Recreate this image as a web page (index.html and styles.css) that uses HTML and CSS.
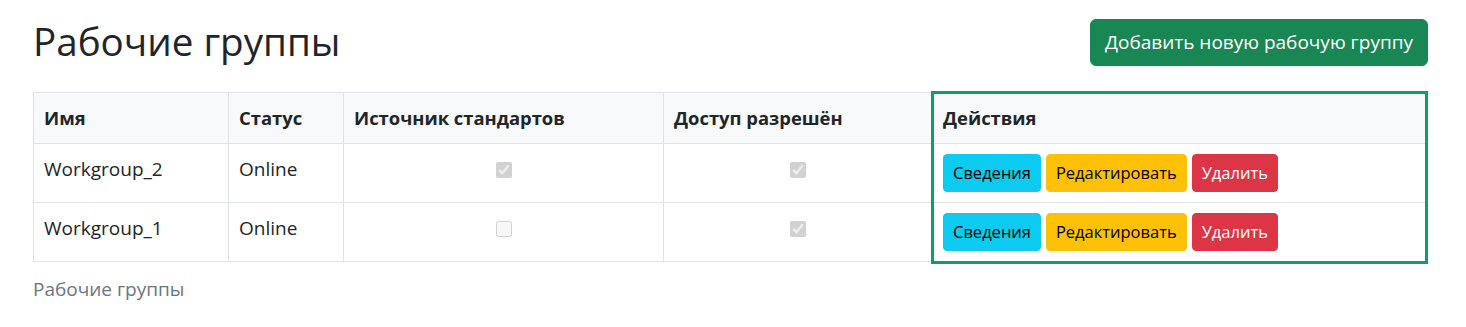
FILE: index.html
```html
<!DOCTYPE html>
<html lang="ru">
<head>
<meta charset="utf-8">
<title>Рабочие группы</title>
<link rel="stylesheet" href="styles.css">
</head>
<body>
<div class="page">
  <div class="header">
    <h1 class="title">Рабочие группы</h1>
    <button class="btn btn-lg btn-success" type="button">Добавить новую рабочую группу</button>
  </div>
  <div class="table-wrap">
    <table class="table">
      <caption class="caption">Рабочие группы</caption>
      <colgroup>
        <col class="col-name">
        <col class="col-status">
        <col class="col-source">
        <col class="col-access">
        <col class="col-actions">
      </colgroup>
      <thead>
        <tr>
          <th>Имя</th>
          <th>Статус</th>
          <th>Источник стандартов</th>
          <th>Доступ разрешён</th>
          <th>Действия</th>
        </tr>
      </thead>
      <tbody>
        <tr>
          <td>Workgroup_2</td>
          <td>Online</td>
          <td class="center"><input class="check" type="checkbox" checked disabled></td>
          <td class="center"><input class="check" type="checkbox" checked disabled></td>
          <td class="actions">
            <button class="btn btn-sm btn-info" type="button">Сведения</button>
            <button class="btn btn-sm btn-warning" type="button">Редактировать</button>
            <button class="btn btn-sm btn-danger" type="button">Удалить</button>
          </td>
        </tr>
        <tr>
          <td>Workgroup_1</td>
          <td>Online</td>
          <td class="center"><input class="check" type="checkbox" disabled></td>
          <td class="center"><input class="check" type="checkbox" checked disabled></td>
          <td class="actions">
            <button class="btn btn-sm btn-info" type="button">Сведения</button>
            <button class="btn btn-sm btn-warning" type="button">Редактировать</button>
            <button class="btn btn-sm btn-danger" type="button">Удалить</button>
          </td>
        </tr>
      </tbody>
    </table>
    <div class="highlight"></div>
  </div>
</div>
</body>
</html>
```
FILE: styles.css
```css
* { box-sizing: border-box; }

html, body {
  margin: 0;
  padding: 0;
  background: #fff;
}

body {
  font-family: "Open Sans", "Noto Sans", sans-serif;
  font-size: 19px;
  line-height: 1.5;
  color: #212529;
}

.page {
  width: 1395px;
  margin-left: 33px;
  padding-top: 19px;
}

.header {
  display: flex;
  justify-content: space-between;
  align-items: center;
  margin-bottom: 26px;
}

.title {
  margin: 0;
  font-size: 38.6px;
  font-weight: 500;
  line-height: 1.2;
  position: relative;
  top: -1px;
}

.btn {
  display: inline-block;
  font-family: inherit;
  border: 1px solid transparent;
  cursor: pointer;
  vertical-align: middle;
  line-height: 1.5;
}

.btn-lg {
  font-size: 19px;
  line-height: 29px;
  height: 47px;
  padding: 8px 14px;
  border-radius: 6px;
}

.btn-sm {
  font-size: 16.5px;
  line-height: 24px;
  height: 38px;
  padding: 6px 9px;
  border-radius: 4px;
  vertical-align: top;
}

.btn-success { background: #198754; border-color: #198754; color: #fff; }
.btn-info { background: #0dcaf0; border-color: #0dcaf0; color: #000; }
.btn-warning { background: #ffc107; border-color: #ffc107; color: #000; }
.btn-danger { background: #dc3545; border-color: #dc3545; color: #fff; }

.table-wrap {
  position: relative;
}

.table {
  width: 1393px;
  border-collapse: collapse;
  table-layout: fixed;
  caption-side: bottom;
}

.col-name { width: 195px; }
.col-status { width: 115px; }
.col-source { width: 320px; }
.col-access { width: 269px; }
.col-actions { width: 494px; }

.table th,
.table td {
  border: 1px solid #dee2e6;
  padding: 10px 10px;
  line-height: 30px;
  vertical-align: top;
  text-align: left;
}

.table thead th {
  background: #f8f9fa;
  font-weight: 700;
  font-size: 18.4px;
}

.table tbody td {
  height: 59px;
}

.table td.center {
  text-align: center;
}

.table td.actions {
  padding-bottom: 0;
  line-height: 38px;
}

.check {
  width: 16px;
  height: 16px;
  margin: 0;
  vertical-align: -2px;
}

.caption {
  text-align: left;
  color: #6c757d;
  padding: 13px 0 10px;
}

.highlight {
  position: absolute;
  left: 898px;
  top: -1px;
  width: 497px;
  height: 173px;
  border: 3px solid #0f9d6c;
  pointer-events: none;
}
```
